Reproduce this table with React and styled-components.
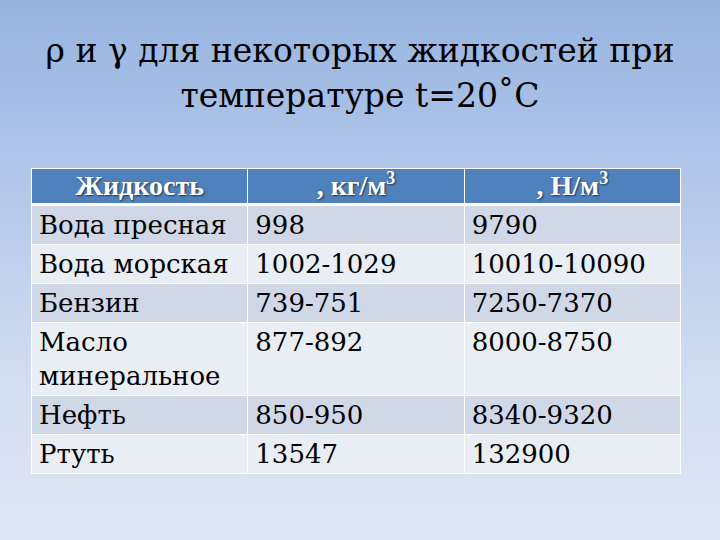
import styled, { createGlobalStyle } from "styled-components";

const serif = `"DejaVu Serif", "Liberation Serif", serif`;
const boldSerif = `"Liberation Serif", "Times New Roman", serif`;

const GlobalStyle = createGlobalStyle`
  html, body {
    margin: 0;
    padding: 0;
  }
  body {
    font-family: ${serif};
  }
`;

const rows = [
  ["Вода пресная", "998", "9790"],
  ["Вода морская", "1002-1029", "10010-10090"],
  ["Бензин", "739-751", "7250-7370"],
  ["Масло минеральное", "877-892", "8000-8750"],
  ["Нефть", "850-950", "8340-9320"],
  ["Ртуть", "13547", "132900"],
];

function App() {
  return (
    <Slide>
      <GlobalStyle />
      <Title>
        ρ и γ для некоторых жидкостей при
        <br />
        температуре t=20˚С
      </Title>
      <Table>
        <thead>
          <tr>
            <HeadCell>Жидкость</HeadCell>
            <HeadCell>
              , кг/м<sup>3</sup>
            </HeadCell>
            <HeadCell>
              , Н/м<sup>3</sup>
            </HeadCell>
          </tr>
        </thead>
        <tbody>
          {rows.map((r, i) => (
            <Row key={r[0]} $odd={i % 2 === 0}>
              {r.map((c, j) => (
                <Cell key={j}>{c}</Cell>
              ))}
            </Row>
          ))}
        </tbody>
      </Table>
    </Slide>
  );
}

export default App;

const Slide = styled.div`
  width: 720px;
  height: 540px;
  box-sizing: border-box;
  padding-top: 28px;
  background: linear-gradient(180deg, #96b3e0 0%, #b4c8ea 35%, #d2ddf1 70%, #dfe7f4 100%);
  display: flex;
  flex-direction: column;
  align-items: center;
  overflow: hidden;
  font-family: ${serif};
`;

const Title = styled.h1`
  margin: 0;
  font-family: ${serif};
  font-weight: normal;
  font-size: 33px;
  line-height: 45px;
  color: #000;
  text-align: center;
  white-space: nowrap;
`;

const Table = styled.table`
  margin: 50px 0 0 -8px;
  width: 650px;
  border-collapse: collapse;
  table-layout: fixed;
  font-family: ${serif};
  font-size: 26px;
`;

const HeadCell = styled.th`
  background: #4f81bd;
  color: #fff;
  font-family: ${boldSerif};
  font-weight: bold;
  font-size: 28px;
  text-align: center;
  height: 34px;
  padding: 0 6px;
  border: 1px solid #fff;
  border-bottom: 3px solid #fff;
  line-height: 30px;
  text-shadow: 1px 1px 2px rgba(0, 0, 0, 0.6);

  sup {
    font-size: 18px;
    line-height: 0;
    vertical-align: 11px;
  }
`;

const Row = styled.tr`
  background: ${(p) => (p.$odd ? "#d0d8e8" : "#e9edf4")};
`;

const Cell = styled.td`
  color: #000;
  padding: 2px 7px 2px;
  line-height: 34px;
  vertical-align: top;
  border: 1px solid #fff;
`;
